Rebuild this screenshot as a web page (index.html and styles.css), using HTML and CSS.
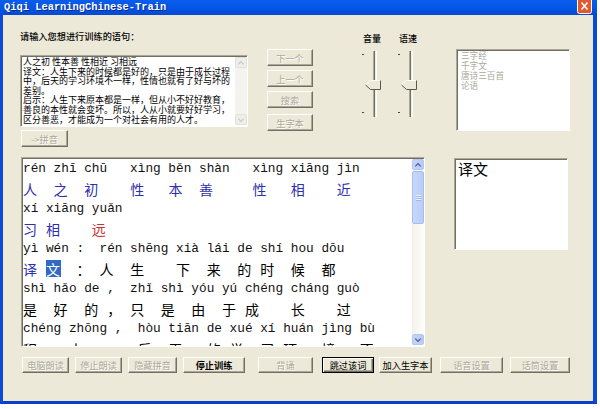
FILE: index.html
```html
<!DOCTYPE html>
<html lang="zh">
<head>
<meta charset="utf-8">
<title>Qiqi LearningChinese-Train</title>
<link rel="stylesheet" href="styles.css">
</head>
<body>
<div class="window">
  <div class="titlebar">
    <span class="title">Qiqi LearningChinese-Train</span>
    <span class="close"><svg width="15" height="14" viewBox="0 0 15 14"><rect x="0.5" y="-2" width="14" height="15.5" rx="2" fill="#E2582F" stroke="#fff"/><path d="M4.5 2.5 L10.5 9.5 M10.5 2.5 L4.5 9.5" stroke="#fff" stroke-width="1.6"/></svg></span>
  </div>
  <div class="body">
    <div class="top">
      <div class="leftcol">
        <div class="label">请输入您想进行训练的语句：</div>
        <div class="inputbox">
          <div class="inputtext">人之初 性本善 性相近 习相远<br>译文：人生下来的时候都是好的，只是由于成长过程<br>中，后天的学习环境不一样，性情也就有了好与坏的<br>差别。<br>启示：人生下来原本都是一样，但从小不好好教育，<br>善良的本性就会变坏。所以，人从小就要好好学习，<br>区分善恶，才能成为一个对社会有用的人才。</div>
          <div class="sb sb-off">
            <div class="sb-btn"><svg width="11" height="10" viewBox="0 0 11 10"><path d="M2.5 6.5 L5.5 3.5 L8.5 6.5" fill="none" stroke="#C5CBD8" stroke-width="1.5"/></svg></div>
            <div class="sb-fill"></div>
            <div class="sb-btn"><svg width="11" height="10" viewBox="0 0 11 10"><path d="M2.5 3.5 L5.5 6.5 L8.5 3.5" fill="none" stroke="#C5CBD8" stroke-width="1.5"/></svg></div>
          </div>
        </div>
        <button class="btn dis pinyin-btn">-&gt;拼音</button>
      </div>
      <div class="navbtns">
        <button class="btn dis">下一个</button>
        <button class="btn dis">上一个</button>
        <button class="btn dis">搜索</button>
        <button class="btn dis gap">生字本</button>
      </div>
      <div class="sliders">
        <div class="slider">
          <div class="slabel">音量</div>
          <svg class="strack" width="24" height="66" viewBox="0 0 24 66"><rect x="2" y="3" width="2" height="1" fill="#444"/><rect x="2" y="61" width="2" height="1" fill="#444"/><rect x="13" y="0" width="1" height="66" fill="#ACA899"/><rect x="14" y="0" width="1" height="66" fill="#716F64"/><rect x="15" y="0" width="1" height="66" fill="#F1EFE2"/><rect x="16" y="0" width="1" height="66" fill="#fff"/><polygon points="5,34 10,29 21,29 21,39 10,39" fill="#ECE9D8"/><path d="M5.5 34 L10.5 29.5 L20.5 29.5" fill="none" stroke="#fff"/><path d="M20.5 29.5 L20.5 38.5 L10.5 38.5 L5.5 34" fill="none" stroke="#5a584f"/></svg>
        </div>
        <div class="slider">
          <div class="slabel">语速</div>
          <svg class="strack" width="24" height="66" viewBox="0 0 24 66"><rect x="2" y="3" width="2" height="1" fill="#444"/><rect x="2" y="61" width="2" height="1" fill="#444"/><rect x="13" y="0" width="1" height="66" fill="#ACA899"/><rect x="14" y="0" width="1" height="66" fill="#716F64"/><rect x="15" y="0" width="1" height="66" fill="#F1EFE2"/><rect x="16" y="0" width="1" height="66" fill="#fff"/><polygon points="5,34 10,29 21,29 21,39 10,39" fill="#ECE9D8"/><path d="M5.5 34 L10.5 29.5 L20.5 29.5" fill="none" stroke="#fff"/><path d="M20.5 29.5 L20.5 38.5 L10.5 38.5 L5.5 34" fill="none" stroke="#5a584f"/></svg>
        </div>
      </div>
      <div class="listbox">
        <div>三字经</div>
        <div>千字文</div>
        <div>唐诗三百首</div>
        <div>论语</div>
      </div>
    </div>
    <div class="middle">
      <div class="textarea">
        <div class="content">
<div class="ln">rén zhī chū   xìng běn shàn   xìng xiāng jìn</div>
<div class="ln"><span class="h b">人</span>  <span class="h b">之</span>  <span class="h b">初</span>    <span class="h b">性</span>   <span class="h b">本</span>  <span class="h b">善</span>     <span class="h b">性</span>   <span class="h b">相</span>    <span class="h b">近</span></div>
<div class="ln">xí xiāng yuǎn</div>
<div class="ln"><span class="h b">习</span> <span class="h b">相</span>    <span class="h r">远</span></div>
<div class="ln">yì wén :  rén shēng xià lái de shí hou dōu</div>
<div class="ln"><span class="h b">译</span> <span class="h sel">文</span>  <span class="h">：</span> <span class="h">人</span>  <span class="h">生</span>    <span class="h">下</span>  <span class="h">来</span>  <span class="h">的</span> <span class="h">时</span>  <span class="h">候</span>  <span class="h">都</span></div>
<div class="ln">shì hǎo de ,  zhǐ shì yóu yú chéng cháng guò</div>
<div class="ln"><span class="h">是</span>  <span class="h">好</span>  <span class="h">的</span> <span class="h">，</span> <span class="h">只</span>  <span class="h">是</span>  <span class="h">由</span>  <span class="h">于</span> <span class="h">成</span>    <span class="h">长</span>    <span class="h">过</span></div>
<div class="ln">chéng zhōng ,  hòu tiān de xué xí huán jìng bù</div>
<div class="ln"><span class="h">程</span>    <span class="h">中</span>    <span class="h">，</span> <span class="h">后</span>  <span class="h">天</span>   <span class="h">的</span> <span class="h">学</span>  <span class="h">习</span> <span class="h">环</span>   <span class="h">境</span>   <span class="h">不</span></div>
        </div>
        <div class="sb">
          <div class="sb-btn"><svg width="11" height="10" viewBox="0 0 11 10"><path d="M2.5 6.5 L5.5 3.5 L8.5 6.5" fill="none" stroke="#4D6185" stroke-width="1.5"/></svg></div>
          <div class="sb-thumb"><span></span><span></span><span></span></div>
          <div class="sb-fill"></div>
          <div class="sb-btn"><svg width="11" height="10" viewBox="0 0 11 10"><path d="M2.5 3.5 L5.5 6.5 L8.5 3.5" fill="none" stroke="#4D6185" stroke-width="1.5"/></svg></div>
        </div>
      </div>
      <div class="transbox">译文</div>
    </div>
    <div class="bbar">
      <button class="btn dis">电脑朗读</button>
      <button class="btn dis">停止朗读</button>
      <button class="btn dis">隐藏拼音</button>
      <button class="btn strong">停止训练</button>
      <button class="btn dis">背诵</button>
      <button class="btn default">跳过该词</button>
      <button class="btn">加入生字本</button>
      <button class="btn dis">语音设置</button>
      <button class="btn dis">话筒设置</button>
    </div>
  </div>
</div>
</body>
</html>
```

FILE: styles.css
```css
* { box-sizing: border-box; }
html, body { margin: 0; padding: 0; background: #fff; }
body { width: 600px; height: 409px; overflow: hidden; font-family: "Noto Sans CJK SC", sans-serif; }

.window { width: 597px; height: 404px; display: flex; flex-direction: column; }

.titlebar {
  height: 15px;
  background: linear-gradient(#0B5EEC, #0356E6 55%, #0848D2);
  display: flex;
  align-items: flex-start;
  justify-content: space-between;
  padding: 0 5px 0 4px;
}
.title {
  font-family: "Liberation Mono", monospace;
  font-weight: bold;
  font-size: 10.4px;
  line-height: 14px;
  color: #fff;
  text-shadow: 1px 1px #0A2A8C;
  white-space: pre;
}
.close { display: block; height: 14px; }
.close svg { display: block; }

.body {
  flex: 1;
  background: #ECE9D8;
  border-left: 3px solid #0A4AD8;
  border-right: 4px solid #0A4AD8;
  border-bottom: 3px solid #0A3FC8;
  display: flex;
  flex-direction: column;
}

/* top area */
.top { display: flex; height: 142px; padding-left: 17px; }
.leftcol { width: 228px; padding-top: 15px; }
.label { font-size: 9.2px; line-height: 12px; height: 12px; color: #000; white-space: nowrap; font-weight: 500; }

.inputbox {
  margin-top: 13px;
  height: 72px;
  background: #fff;
  border: 1px solid;
  border-color: #ACA899 #fff #fff #ACA899;
  box-shadow: inset 1px 1px #716F64;
  display: flex;
  padding: 1px 0 1px 1px;
}
.inputtext {
  flex: 1;
  font-size: 9px;
  line-height: 9.6px;
  color: #000;
  white-space: nowrap;
  overflow: hidden;
  padding: 0 0 0 1px;
}

.btn {
  display: block;
  margin: 0;
  padding: 0;
  font-family: "Noto Sans CJK SC", sans-serif;
  font-size: 9.2px;
  line-height: 12px;
  color: #000;
  background: #ECE9D8;
  border: 1px solid;
  border-color: #fff #716F64 #716F64 #fff;
  box-shadow: inset -1px -1px #ACA899;
  border-radius: 0;
  white-space: nowrap;
}
.btn.dis { color: #ACA899; text-shadow: 1px 1px #fff; }
.btn.default {
  border: 1px solid #000;
  box-shadow: inset 1px 1px #fff, inset -1px -1px #716F64, inset -2px -2px #ACA899;
}
.pinyin-btn { margin: 3px 0 0 1px; width: 47px; height: 17px; }

.navbtns { margin-left: 19px; padding-top: 34px; width: 46px; display: flex; flex-direction: column; gap: 4px; }
.navbtns .btn { width: 46px; height: 17px; }
.navbtns .gap { margin-top: 2px; }

.sliders { margin-left: 47px; padding-top: 19px; display: flex; gap: 12px; }
.slider { width: 24px; display: flex; flex-direction: column; align-items: center; }
.slabel { font-size: 9px; line-height: 10px; height: 10px; color: #000; white-space: nowrap; font-weight: 500; }
.strack { display: block; margin-top: 7px; }

.listbox {
  margin-left: 36px;
  margin-top: 34px;
  width: 114px;
  height: 82px;
  background: #fff;
  border: 1px solid;
  border-color: #ACA899 #fff #fff #ACA899;
  box-shadow: inset 1px 1px #716F64;
  padding: 0 0 0 4px;
  font-size: 8.6px;
  line-height: 10px;
  color: #ACA899;
}

/* middle */
.middle { display: flex; height: 190px; padding-left: 18px; }
.textarea {
  width: 404px;
  height: 190px;
  background: #fff;
  border: 1px solid;
  border-color: #ACA899 #fff #fff #ACA899;
  box-shadow: inset 1px 1px #716F64;
  padding: 1px 0 0 1px;
  display: flex;
}
.content {
  flex: 1;
  overflow: hidden;
  padding-top: 0;
  font-family: "Liberation Mono", "DejaVu Sans Mono", monospace;
  font-size: 12.75px;
  color: #111;
}
.ln { height: 20px; line-height: 20px; white-space: pre; }
.h {
  display: inline-block;
  width: 15.3px;
  height: 20px;
  vertical-align: top;
  font-family: "Noto Sans CJK SC", sans-serif;
  font-size: 14px;
  line-height: 20px;
  color: #000;
}
.h.b { color: #2E2EAE; }
.h.r { color: #C83434; }
.h.sel { color: #fff; background: linear-gradient(transparent 1px, #316AC5 1px, #316AC5 18px, transparent 18px); }

.sb {
  width: 12px;
  display: flex;
  flex-direction: column;
  background: linear-gradient(90deg, #F3F1EA, #FDFDFA);
}
.sb-btn {
  height: 11px;
  background: linear-gradient(90deg, #C4D5FC, #B6CAF6);
  border: 1px solid #B3C6F2;
  border-radius: 2px;
  display: flex;
  align-items: center;
  justify-content: center;
}
.sb-btn svg { display: block; }
.sb-thumb {
  margin-top: 1px;
  height: 53px;
  background: linear-gradient(90deg, #C8D7FC, #B9CDF8);
  border: 1px solid #A8BDEE;
  border-radius: 2px;
  display: flex;
  flex-direction: column;
  align-items: center;
  justify-content: center;
  gap: 1px;
}
.sb-thumb span { display: block; width: 5px; height: 1px; background: #EEF3FE; box-shadow: 0 1px #9FB5E6; }
.sb-fill { flex: 1; }
.sb-off { background: #F4F3EE; }
.sb-off .sb-btn { background: #EFEEE7; border-color: #E4E2D8; }
.textarea > .sb { margin-bottom: 1px; }

.transbox {
  margin-left: 29px;
  margin-top: 1px;
  width: 114px;
  height: 92px;
  background: #fff;
  border: 1px solid;
  border-color: #ACA899 #fff #fff #ACA899;
  box-shadow: inset 1px 1px #716F64;
  padding: 1px 0 0 3px;
  font-size: 15px;
  line-height: 18px;
  color: #000;
}

/* bottom bar */
.bbar { display: flex; margin-top: 10px; padding-left: 19px; }
.bbar .btn { height: 16px; }
.bbar .btn:nth-child(1) { width: 47px; }
.bbar .btn:nth-child(2) { width: 47px; margin-left: 6px; }
.bbar .btn:nth-child(3) { width: 49px; margin-left: 6px; }
.bbar .btn:nth-child(4) { width: 62px; margin-left: 6px; }
.bbar .btn:nth-child(5) { width: 55px; margin-left: 13px; }
.bbar .btn:nth-child(6) { width: 52px; margin-left: 9px; }
.bbar .btn:nth-child(7) { width: 53px; margin-left: 5px; }
.bbar .btn:nth-child(8) { width: 63px; margin-left: 8px; }
.bbar .btn:nth-child(9) { width: 60px; margin-left: 7px; }
.btn.strong { font-weight: bold; }
```
